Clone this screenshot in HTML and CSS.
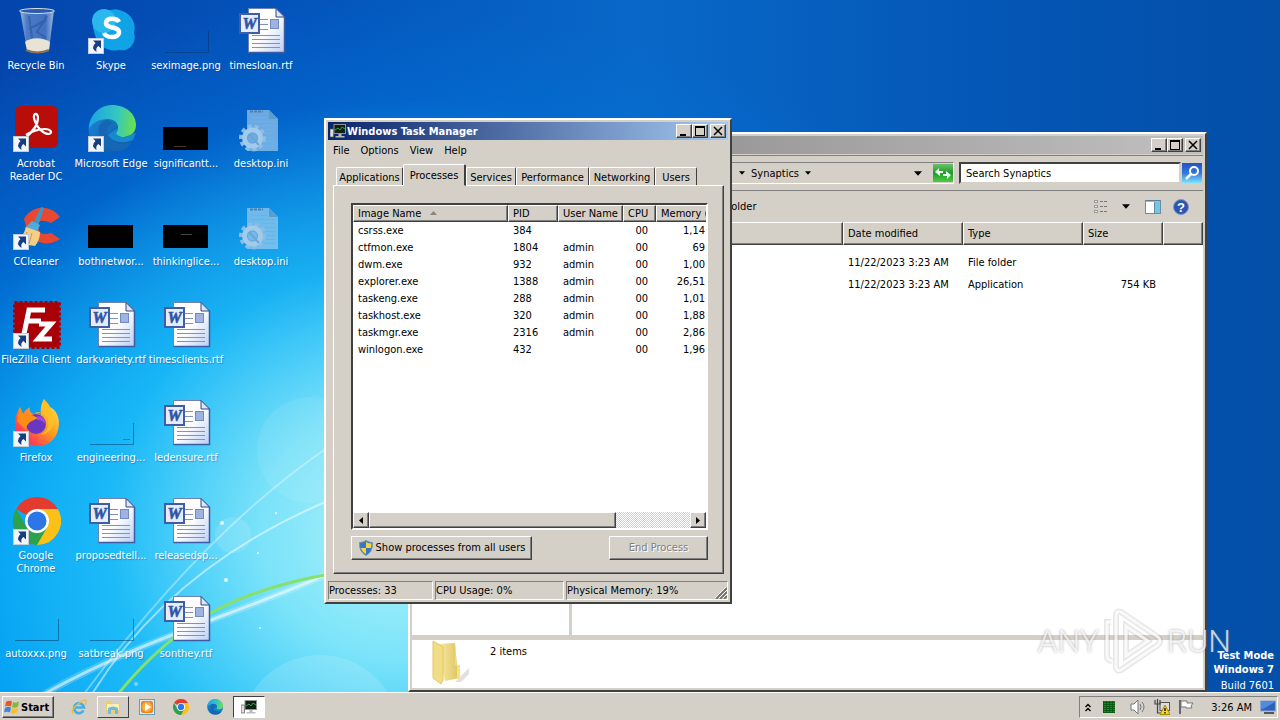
FILE: index.html
```html
<!DOCTYPE html>
<html lang="en">
<head>
<meta charset="utf-8">
<title>Desktop</title>
<link rel="stylesheet" href="styles.css">
</head>
<body>
<svg class="defs" aria-hidden="true">
  <defs>
    <linearGradient id="gPage" x1="0" y1="0" x2="1" y2="1"><stop offset=".5" stop-color="#fff"/><stop offset="1" stop-color="#b9cdf4"/></linearGradient>
    <linearGradient id="gBin" x1="0" x2="1" y1="0" y2="0"><stop offset="0" stop-color="#bcd0e8"/><stop offset=".2" stop-color="#5f88cc"/><stop offset=".75" stop-color="#4f7dc8"/><stop offset="1" stop-color="#c6d6ea"/></linearGradient>
    <linearGradient id="gEdgeA" x1="0" y1=".3" x2="1" y2=".4"><stop offset="0" stop-color="#1ba3e4"/><stop offset=".6" stop-color="#35c7c0"/><stop offset="1" stop-color="#6be04c"/></linearGradient>
    <linearGradient id="gEdgeB" x1="0" y1="0" x2="1" y2="1"><stop offset="0" stop-color="#1b8ddb"/><stop offset="1" stop-color="#0c4f9c"/></linearGradient>
    <linearGradient id="gFox" x1="1" y1="0" x2="0" y2="1"><stop offset="0" stop-color="#fff34a"/><stop offset=".45" stop-color="#ff9a1e"/><stop offset=".75" stop-color="#ff4450"/><stop offset="1" stop-color="#e0208c"/></linearGradient>
    <linearGradient id="gFolder" x1="0" x2="1"><stop offset="0" stop-color="#f9ecaa"/><stop offset="1" stop-color="#dfc25c"/></linearGradient>
    <linearGradient id="gMag" x1="0" y1="0" x2="0" y2="1"><stop offset="0" stop-color="#2451c4"/><stop offset=".5" stop-color="#3478dc"/><stop offset="1" stop-color="#7fe4fa"/></linearGradient>
    <linearGradient id="gGreen" x1="0" y1="0" x2="0" y2="1"><stop offset="0" stop-color="#6cc06a"/><stop offset=".5" stop-color="#1f9a2c"/><stop offset="1" stop-color="#50cc40"/></linearGradient>
    <symbol id="shortcut" viewBox="0 0 16 16"><rect x=".5" y=".5" width="15" height="15" fill="#f2f5fa" stroke="#c4ccd8"/><path d="M5 2.500h8v8l-2.500-2.500Q7.500 9.500 8.500 14 2 10 7.500 5z" fill="#173f80"/></symbol>
    <symbol id="word" viewBox="0 0 48 48"><path d="M10.500 1.500H38l8.500 8.500v35.500h-36z" fill="url(#gPage)" stroke="#6e83b5"/><path d="M38 1.500V10h8.500z" fill="#dce6f8" stroke="#2c4684"/><path d="M46.500 10v35.500h-36" fill="none" stroke="#3c5ca4" stroke-width="1.500"/><path d="M22 12.500h8M22 17.500h8M22 22.500h8M14 28.500h28M14 32.500h28M14 36.500h28M14 40.500h28" stroke="#8293b8"/><rect x="32.500" y="12.500" width="8" height="9" fill="#9fb3e0" stroke="#7189c6"/><rect x="2" y="7" width="19" height="19" fill="#e6ecf9" stroke="#405ea6" stroke-width="2"/><text x="11.500" y="22" text-anchor="middle" font-family="Liberation Serif, serif" font-size="16" font-weight="bold" font-style="italic" fill="#2c54a8" stroke="#2c54a8" stroke-width=".6">W</text></symbol>
    <symbol id="ini" viewBox="0 0 48 48"><path d="M9 5h22l9 9v32H9z" fill="#a5cff0" opacity=".65"/><path d="M31 5v9h9z" fill="#5c9dd0"/><path d="M12 6.500h13" stroke="#4a7eb4" stroke-width="2" stroke-dasharray="3 1"/><path d="M13 12.500h16M13 16.500h24M24 20.500h13M27 24.500h10M27 28.500h10M27 32.500h10M26 36.500h11M24 40.500h13" stroke="#71b0df"/><circle cx="14.500" cy="33" r="11.500" fill="none" stroke="#8fbde2" stroke-width="4" stroke-dasharray="4 3"/><circle cx="14.500" cy="33" r="8" fill="none" stroke="#a2caeb" stroke-width="5"/><circle cx="14.500" cy="33" r="5" fill="none" stroke="#6ba5d6"/><path d="M11 29l10 11" stroke="#6ba5d6" stroke-width="2"/></symbol>
    <symbol id="edge" viewBox="0 0 48 48"><circle cx="24" cy="24" r="23.500" fill="url(#gEdgeB)"/><path d="M1 21C3 9 12 0 24 0c14 0 24 9 24 20 0 8-6 12-12 12-5 0-8-2-8-4 0-1 2-2 2-6 0-4-4-8-10-8C11 14 4 18 1 24z" fill="url(#gEdgeA)"/><path d="M18 15C10 17 8 27 14 37c4 6 11 10 18 9 5-1 10-5 12-10-8 5-20 3-24-5-3-6 0-11 4-13-1-2-3-3-6-3z" fill="#1766b5"/><path d="M20 30c5 8 16 9 25 5l3-7-12 4c-5 0-8-2-8-4 0 0 2-2 2-5z" fill="#1789ce"/></symbol>
    <symbol id="chrome" viewBox="0 0 48 48"><path d="M24 24 3.200 12A24 24 0 0 1 44.800 12z" fill="#e33b2e"/><path d="M24 24V12h20.800A24 24 0 0 1 24 48z" fill="#fbc116"/><path d="M3.200 12l10.400 18L24 24l10.400 6L24 48A24 24 0 0 1 3.200 12z" fill="#2da24c"/><circle cx="24" cy="24" r="12" fill="#fff"/><circle cx="24" cy="24" r="9.500" fill="#2c76e8"/></symbol>
    <symbol id="monitor" viewBox="0 0 16 16"><rect x="0" y="6" width="3.500" height="8" fill="#ddd" stroke="#555" stroke-width=".7"/><rect x="4" y="1.500" width="11.500" height="9" fill="#0c2114" stroke="#8f9690"/><path d="M5 7l3-2 2 2 2-3 3 2" fill="none" stroke="#35a043"/><path d="M8.500 11h3v2h3v1.500h-9V13h3z" fill="#bbb"/></symbol>
    <symbol id="pngThumb" viewBox="0 0 48 48"><path d="M45.500 24v21.500H2" fill="none" stroke="#06335e" stroke-opacity=".5"/></symbol>
    <symbol id="down" viewBox="0 0 7 4"><path d="M0 0h7L3.500 4z"/></symbol>
  </defs>
</svg>

<main class="desktop">
  <svg class="wallpaper" viewBox="0 0 1280 692" preserveAspectRatio="none" aria-hidden="true">
    <g fill="none">
      <g stroke="#fff"><path d="M44 694C140 640 235 615 330 573" stroke-opacity=".2" stroke-width="7"/><path d="M44 694C140 640 235 615 330 573" stroke-opacity=".55" stroke-width="3"/>
      <path d="M84 694C150 605 235 510 330 446" stroke-opacity=".35" stroke-width="2"/><path d="M92 694C150 600 235 540 330 500" stroke-opacity=".5" stroke-width="2"/></g>
      <path d="M118 694C180 618 240 590 330 574" stroke="#86e06a" stroke-width="3"/>
    </g>
    <g fill="#fff"><circle cx="310" cy="450" r="53" fill-opacity=".08"/><circle cx="233" cy="535" r="18" fill-opacity=".12"/><circle cx="320" cy="735" r="80" fill-opacity=".14"/><circle cx="222" cy="523" r="2" fill-opacity=".8"/><circle cx="276" cy="513" r="1"/><circle cx="226" cy="580" r="2" fill-opacity=".8"/><circle cx="258" cy="553" r="1"/><circle cx="136" cy="684" r="2" fill-opacity=".4"/><circle cx="260" cy="628" r="1"/></g>
  </svg>

  <ul class="icons">
    <li><svg><path d="M7 3h34l-5 40q-11 6-22 0z" fill="url(#gBin)" fill-opacity=".8"/><ellipse cx="24" cy="4" rx="17.500" ry="2.500" fill="#2b5cab" stroke="#d7dfe6"/><path d="M12 35c6-5 17-5 25 0l-1 8q-11 4-22 0z" fill="#e8e3d4"/><path d="M13 43q11 5 23 0" fill="none" stroke="#89735a" stroke-width="2"/><path d="M16 9l3 22M34 9l-10 16 9 6M16 22l17-9" stroke="#274d94" stroke-width="2" fill="none" opacity=".5"/></svg><span>Recycle Bin</span></li>
    <li><svg><path d="M5 21A19 19 0 0 1 23 3 15 15 0 0 1 34 4 18 18 0 0 1 46 26 13 13 0 0 1 31 43 20 20 0 0 1 7 28z" fill="#11a3e7"/><circle cx="16" cy="14" r="12" fill="#2bb8ee"/><path d="M31 15c-2-4-13-5-13 1 0 6 13 3 13 9 0 7-13 6-15 1" fill="none" stroke="#fff" stroke-width="4.500"/><use href="#shortcut" y="31" width="16" height="16"/></svg><span>Skype</span></li>
    <li><svg><use href="#pngThumb"/></svg><span>seximage.png</span></li>
    <li><svg><use href="#word"/></svg><span>timesloan.rtf</span></li>

    <li><svg><rect x="2" y="1" width="43" height="42" rx="6" fill="#b80d08"/><path d="M11 34C17 29 25 22 25 13c0-6-5-5-4 0 2 9 9 16 15 16 4-1 2-5-4-5-7 0-15 3-19 6" fill="none" stroke="#fff" stroke-width="2.200"/><use href="#shortcut" y="31" width="16" height="16"/></svg><span>Acrobat<br>Reader DC</span></li>
    <li><svg><use href="#edge"/><use href="#shortcut" y="31" width="16" height="16"/></svg><span>Microsoft Edge</span></li>
    <li><svg><rect y="22" width="45" height="23"/><path d="M11 41.500h12" stroke="#443b12"/></svg><span>significantt...</span></li>
    <li><svg><use href="#ini"/></svg><span>desktop.ini</span></li>

    <li><svg><path d="M47 14A21 21 0 0 0 11 16l4 14a22 22 0 0 0 32 6l-9-6q-12 4-13-6t13-4z" fill="#e84832"/><path d="M28 4l3 1-6 18-5-2z" fill="#4095c8"/><path d="M19 18l8 4-3 7-12-4z" fill="#51aadd"/><path d="M13 24l14 5q0 8-5 14l-20-3q8-5 11-16z" fill="#f3cf85"/><path d="M14 29l-4 11M19 30l-3 11" stroke="#cf994c"/><use href="#shortcut" y="31" width="16" height="16"/></svg><span>CCleaner</span></li>
    <li><svg><rect y="22" width="45" height="23"/></svg><span>bothnetwor...</span></li>
    <li><svg><rect y="22" width="45" height="23"/><path d="M18 31.500h11" stroke="#444"/></svg><span>thinkinglice...</span></li>
    <li><svg><use href="#ini"/></svg><span>desktop.ini</span></li>

    <li><svg><rect x="1.500" y="1.500" width="45" height="45" fill="#a90008" stroke="#a90008" stroke-width="3" stroke-dasharray="3 2"/><path d="M11 33l5-24h16M14 20h14M26 23h12L25 38h14" fill="none" stroke="#fff" stroke-width="5"/><use href="#shortcut" y="32" width="16" height="16"/></svg><span>FileZilla Client</span></li>
    <li><svg><use href="#word"/></svg><span>darkvariety.rtf</span></li>
    <li><svg><use href="#word"/></svg><span>timesclients.rtf</span></li>
    <li class="empty"></li>

    <li><svg><path d="M31 0c1 5 5 7 9 10 6 5 7 14 5 21-2 9-10 16-20 16C12 47 3 38 2 27c0-7 1-12 5-19l3 7c2-4 5-5 7-7-1 4 1 7 4 7 2-1 5-1 7 1-1-6 0-11 3-16z" fill="url(#gFox)"/><circle cx="23" cy="25" r="10" fill="#6a38c0"/><path d="M7 8l3 7q5-3 9 1l6 3-8 4q-5 4-3 9L4 22z" fill="#ff8d16"/><path d="M21 14q11-3 14 7 2 10-7 15 10-2 13-12Q40 8 31 0q-2 7-1 14l-9 0z" fill="#ffbe26"/><path d="M24 17q9 0 9 9-3-5-9-5z" fill="#a347dd"/><use href="#shortcut" y="32" width="16" height="16"/></svg><span>Firefox</span></li>
    <li><svg><use href="#pngThumb"/><path d="M35 40.500h7" stroke="#1a7e9c"/></svg><span>engineering...</span></li>
    <li><svg><use href="#word"/></svg><span>ledensure.rtf</span></li>
    <li class="empty"></li>

    <li><svg><use href="#chrome"/><use href="#shortcut" y="32" width="16" height="16"/></svg><span>Google<br>Chrome</span></li>
    <li><svg><use href="#word"/></svg><span>proposedtell...</span></li>
    <li><svg><use href="#word"/></svg><span>releasedsp...</span></li>
    <li class="empty"></li>

    <li><svg><use href="#pngThumb"/></svg><span>autoxxx.png</span></li>
    <li><svg><use href="#pngThumb"/></svg><span>satbreak.png</span></li>
    <li><svg><use href="#word"/></svg><span>sonthey.rtf</span></li>
  </ul>

  <div class="build"><b>Test Mode</b><b>Windows 7</b><span>Build 7601</span></div>

  <section class="window explorer" aria-label="Synaptics">
    <header class="titlebar inactive">
      <span class="title"></span>
      <button class="ctl" aria-label="Minimize"><svg viewBox="0 0 14 12"><path d="M3 9h6v2H3z"/></svg></button><button class="ctl" aria-label="Maximize"><svg viewBox="0 0 14 12"><path d="M2 1h10v10H2zM3 3v7h8V3z" fill-rule="evenodd"/></svg></button><button class="ctl close" aria-label="Close"><svg viewBox="0 0 14 12"><path d="M3 2l8 8M11 2l-8 8" stroke="#000" stroke-width="1.500"/></svg></button>
    </header>
    <div class="addressrow">
      <nav class="address">
        <svg class="arrow"><use href="#down"/></svg><span>Synaptics</span><svg class="arrow"><use href="#down"/></svg>
        <svg class="arrow drop"><use href="#down"/></svg>
        <button class="refresh" aria-label="Refresh"><svg viewBox="0 0 20 18"><rect width="20" height="18" fill="url(#gGreen)"/><path d="M6 4v3h4v2H7v3L2 8zM14 15v-3h-4v-2h3V7l5 4z" fill="#eaffea"/></svg></button>
      </nav>
      <input class="search" type="text" value="Search Synaptics" aria-label="Search Synaptics">
      <button class="go" aria-label="Search"><svg viewBox="0 0 20 20"><rect width="20" height="20" fill="url(#gMag)"/><circle cx="12" cy="8" r="4" fill="none" stroke="#fff" stroke-width="2"/><path d="M9 11l-5 5" stroke="#fff" stroke-width="2.500"/></svg></button>
    </div>
    <div class="commands">
      <button class="plain newfolder">New folder</button>
      <button class="plain" aria-label="Views"><svg width="16" height="16"><path d="M1 2.500h4M1 7.500h4M1 12.500h4" stroke="#999" stroke-width="3"/><path d="M2 2.500h2M2 7.500h2M2 12.500h2" stroke="#eee"/><path d="M7 2.500h8M7 7.500h8M7 12.500h8" stroke="#777" stroke-dasharray="3 1"/></svg></button>
      <button class="plain viewdrop" aria-label="More views"><svg class="arrow"><use href="#down"/></svg></button>
      <button class="plain preview" aria-label="Preview pane"><svg width="16" height="16"><rect x=".5" y="1.500" width="15" height="13" fill="#fff" stroke="#6d8aa8"/><path d="M1 2h14" stroke="#526f92"/><path d="M10 3h5v11h-5z" fill="#71c9df"/><path d="M9.500 3v11" stroke="#658aa8"/></svg></button>
      <button class="plain" aria-label="Help"><svg width="16" height="16"><circle cx="8" cy="8" r="7.500" fill="#2e55b4" stroke="#8095c4"/><text x="8" y="12.500" text-anchor="middle" font-family="Liberation Sans, sans-serif" font-weight="bold" font-size="13" fill="#fff">?</text></svg></button>
    </div>
    <div class="browse">
      <div class="tree"></div>
      <div class="files">
        <table class="filetable">
          <colgroup><col><col class="w120"><col class="w120"><col class="w80"><col class="w40"></colgroup>
          <thead><tr><th></th><th>Date modified</th><th>Type</th><th>Size</th><th></th></tr></thead>
          <tbody><tr class="first"><td></td><td>11/22/2023 3:23 AM</td><td>File folder</td><td></td><td></td></tr>
          <tr><td></td><td>11/22/2023 3:23 AM</td><td>Application</td><td class="num">754 KB</td><td></td></tr></tbody>
        </table>
      </div>
    </div>
    <footer class="details">
      <svg width="48" height="48"><path d="M26 42l14-14v6l-8 8z" fill="#999" opacity=".3"/><path d="M8 4l18-1 2 22 3 1v12l-15 3z" fill="url(#gFolder)"/><path d="M26 3l1 22h4v13l-3 1V26l-2-1z" fill="#f5e27c"/><path d="M4 1l10 6v33l-2 4-8-6z" fill="#f1dd85" stroke="#e0c669"/></svg>
      <span>2 items</span>
    </footer>
  </section>

  <section class="window taskmgr" aria-label="Windows Task Manager">
    <header class="titlebar">
      <svg class="appicon"><use href="#monitor"/></svg><span class="title">Windows Task Manager</span>
      <button class="ctl" aria-label="Minimize"><svg viewBox="0 0 14 12"><path d="M3 9h6v2H3z"/></svg></button><button class="ctl" aria-label="Maximize"><svg viewBox="0 0 14 12"><path d="M2 1h10v10H2zM3 3v7h8V3z" fill-rule="evenodd"/></svg></button><button class="ctl close" aria-label="Close"><svg viewBox="0 0 14 12"><path d="M3 2l8 8M11 2l-8 8" stroke="#000" stroke-width="1.500"/></svg></button>
    </header>
    <nav class="menu"><button>File</button><button>Options</button><button>View</button><button>Help</button></nav>
    <div class="tabs" role="tablist"><button role="tab">Applications</button><button role="tab" class="selected" aria-selected="true">Processes</button><button role="tab">Services</button><button role="tab">Performance</button><button role="tab">Networking</button><button role="tab">Users</button></div>
    <div class="panel">
      <div class="list">
        <table class="proc">
          <colgroup><col><col class="w50"><col class="w65"><col class="w33"><col class="w50"></colgroup>
          <thead><tr><th>Image Name <svg class="sort" viewBox="0 0 7 4"><path d="M0 4h7L3.500 0z" fill="#8a867e"/></svg></th><th>PID</th><th>User Name</th><th>CPU</th><th>Memory (</th></tr></thead>
          <tbody>
          <tr><td>csrss.exe</td><td>384</td><td></td><td>00</td><td>1,14</td></tr>
          <tr><td>ctfmon.exe</td><td>1804</td><td>admin</td><td>00</td><td>69</td></tr>
          <tr><td>dwm.exe</td><td>932</td><td>admin</td><td>00</td><td>1,00</td></tr>
          <tr><td>explorer.exe</td><td>1388</td><td>admin</td><td>00</td><td>26,51</td></tr>
          <tr><td>taskeng.exe</td><td>288</td><td>admin</td><td>00</td><td>1,01</td></tr>
          <tr><td>taskhost.exe</td><td>320</td><td>admin</td><td>00</td><td>1,88</td></tr>
          <tr><td>taskmgr.exe</td><td>2316</td><td>admin</td><td>00</td><td>2,86</td></tr>
          <tr><td>winlogon.exe</td><td>432</td><td></td><td>00</td><td>1,96</td></tr>
          </tbody>
        </table>
        <div class="scroll"><button aria-label="Scroll left"><svg viewBox="0 0 4 7"><path d="M4 0v7L0 3.500z"/></svg></button><div class="track"><div class="thumb"></div></div><button aria-label="Scroll right"><svg viewBox="0 0 4 7"><path d="M0 0v7l4-3.500z"/></svg></button></div>
      </div>
      <div class="actions">
        <button class="push"><svg width="16" height="16"><path d="M8 .5q3 2 6.500 2Q15 12 8 15.500 1 12 1.500 2.500 5 2.500 8 .5z" fill="#3476c8" stroke="#7e93a8"/><path d="M8 2q3 1.500 5.500 1.500L13 8H8zM8 8v6Q4 12 3 8z" fill="#f3d443"/></svg>Show processes from all users</button>
        <button class="push end" disabled>End Process</button>
      </div>
    </div>
    <footer class="status"><span>Processes: 33</span><span>CPU Usage: 0%</span><span>Physical Memory: 19%<svg width="13" height="13"><path d="M2 13L13 2M6 13l7-7M10 13l3-3" stroke="#77736c" stroke-width="2"/><path d="M1 12L12 1M5 12l8-8M9 12l4-4" stroke="#fff"/></svg></span></footer>
  </section>

  <div class="watermark"><span>ANY</span><svg width="62" height="66" viewBox="0 0 62 66"><g id="play" fill="none" stroke="#8c8c8c" stroke-opacity=".22" stroke-width="6"><path d="M19 4l37 25q4 4 0 8L19 62q-5 2-5-4V8q0-6 5-4zM24 18v30l22-15zM9 14H5v34q0 4 5 5"/></g><path d="M19 4l37 25q4 4 0 8L19 62q-5 2-5-4V8q0-6 5-4zM24 18v30l22-15zM9 14H5v34q0 4 5 5" fill="none" stroke="#fff" stroke-opacity=".75" stroke-width="3"/></svg><span>RUN</span></div>
</main>

<footer class="taskbar">
  <button class="start"><svg width="16" height="16"><path d="M2 3q3-2 6-.5L7 7.500Q4 6 1 7.500z" fill="#e8562a"/><path d="M9 3q3 1.500 6-.5L14 7.500q-3 2-6 .5z" fill="#82b93c"/><path d="M1 9q3-2 6-.5L6 13.500Q3 12 0 13.500z" fill="#3f86d6"/><path d="M8 9q3 1.500 6-.5L13 13.500q-3 2-6 .5z" fill="#f8bf2c"/></svg>Start</button>
  <button class="task" aria-label="Internet Explorer"><svg viewBox="0 0 16 16"><path d="M12.500 11.500A5 5 0 1 1 13 8.500H4" fill="none" stroke="#47aee4" stroke-width="2.600"/><path d="M2 14.500Q-1 11 7 5t8-3-1 4" fill="none" stroke="#edbd32" stroke-width="1.300"/></svg></button>
  <button class="task raised" aria-label="Windows Explorer"><svg viewBox="0 0 16 16"><path d="M1 2h5l1 2h8v10H1z" fill="#e8cf70"/><path d="M2 5h12v6H2z" fill="#fff2b0"/><path d="M3 15V9q5-3 10 0v6h-3v-4H6v4z" fill="#72b9e7"/></svg></button>
  <button class="task" aria-label="Media Player"><svg viewBox="0 0 16 16"><rect x=".5" y=".5" width="15" height="15" fill="#dbeaf5" stroke="#629fc7"/><rect x="2" y="2" width="12" height="12" rx="2" fill="#f08419"/><circle cx="8" cy="8" r="5" fill="#ffad42"/><path d="M6 4l6 4-6 4z" fill="#fff"/></svg></button>
  <button class="task" aria-label="Google Chrome"><svg><use href="#chrome"/></svg></button>
  <button class="task" aria-label="Microsoft Edge"><svg><use href="#edge"/></svg></button>
  <button class="task pressed" aria-label="Task Manager"><svg><use href="#monitor"/></svg></button>
  <div class="tray">
    <svg class="chev" viewBox="0 0 6 9"><path d="M.5 4L3 1.500 5.500 4M.5 8L3 5.500 5.500 8" fill="none" stroke="#000" stroke-width="1.400"/></svg>
    <svg class="cpu" viewBox="0 0 12 12"><rect width="12" height="12" fill="#075c12"/><path d="M2 0v12M5 0v12M8 0v12M11 0v12" stroke="#1fc33a" stroke-dasharray="1 1"/></svg>
    <svg viewBox="0 0 16 16"><path d="M1 5h3l4-4v14l-4-4H1z" fill="#fff" stroke="#777"/><path d="M10 5q2 3 0 6M12 3q4 5 0 10" fill="none" stroke="#777"/></svg>
    <svg viewBox="0 0 16 16"><rect x="6" y="3.500" width="9.500" height="8" fill="#ddd" stroke="#555"/><path d="M1 1v4h5V1M3.500 1v13H7M3.500 0v4" fill="none" stroke="#444" stroke-width="1.200"/><path d="M11 6l5 9.500H6z" fill="#f8d529" stroke="#a98b00"/><path d="M11 9v3M11 13v1.500" stroke="#000" stroke-width="1.300"/></svg>
    <svg class="flag" viewBox="0 0 16 16"><path d="M2 1v14" stroke="#666" stroke-width="2"/><path d="M3 2h6v2h6l-2 3 1 2H8V8H3z" fill="#fff" stroke="#777"/></svg>
    <time>3:26 AM</time>
    <svg viewBox="0 0 16 16"><rect x=".5" y="2" width="15" height="10" fill="#2c61bc" stroke="#8ba7d2"/><path d="M1 3h14L3 10H1z" fill="#518bd9"/><path d="M4 14h10" stroke="#555" stroke-width="2"/></svg>
  </div>
</footer>
</body>
</html>
```
FILE: styles.css
```css
* { box-sizing: border-box; }
html, body { height: 100%; }
body {
  margin: 0;
  display: flex;
  flex-direction: column;
  overflow: hidden;
  font: 11px/13px "DejaVu Sans Condensed", Tahoma, "Noto Sans", sans-serif;
  color: #000;
}
button, input { font: inherit; color: inherit; border: 0; padding: 0; background: none; border-radius: 0; }
.defs { position: absolute; width: 0; height: 0; }

.desktop {
  position: relative;
  flex: 1;
  overflow: hidden;
  background:
    radial-gradient(ellipse 470px 430px at 400px 530px, rgba(184,247,250,.95) 0%, rgba(140,235,250,.85) 30%, rgba(40,200,250,.6) 62%, rgba(0,160,240,0) 100%),
    radial-gradient(ellipse 800px 620px at 350px 620px, #22bdf8 0%, #009cf2 45%, rgba(0,118,220,.6) 75%, rgba(4,86,188,0) 100%),
    linear-gradient(90deg, #0345ac 0%, #0355bc 25%, #0868c8 50%, #0455b4 80%, #034fa8 100%);
}
.wallpaper { position: absolute; inset: 0; width: 100%; height: 100%; }

.icons {
  position: relative;
  list-style: none;
  margin: 0;
  padding: 7px 0 0;
  display: grid;
  grid-template-columns: repeat(4, 75px);
  grid-auto-rows: 98px;
}
.icons li { display: flex; flex-direction: column; align-items: center; gap: 4px; padding-right: 1px; }
.icons svg { width: 48px; height: 48px; flex: none; }
.icons span { padding-right: 2px; color: #fff; text-align: center; white-space: nowrap; text-shadow: 1px 1px 1px rgba(0,40,100,.35); }

.window {
  position: absolute;
  display: flex;
  flex-direction: column;
  padding: 2px;
  background: #d4d0c8;
  border: 2px solid;
  border-color: #fff #404040 #404040 #fff;
}
.explorer { left: 408px; top: 132px; width: 799px; height: 560px; }
.taskmgr { left: 324px; top: 118px; width: 408px; height: 486px; }

.titlebar {
  display: flex;
  align-items: center;
  flex: none;
  height: 18px;
  padding: 0 2px;
  color: #fff;
  font-weight: bold;
  background: linear-gradient(90deg, #0a246a, #a6caf0);
}
.titlebar.inactive { background: linear-gradient(90deg, #808080, #c0c0c0); }
.title { flex: 1; white-space: nowrap; }
.appicon { width: 16px; height: 16px; margin-right: 1px; }
.ctl, .scroll button, .push, .thumb, .start {
  background: #d4d0c8;
  border: 1px solid;
  border-color: #fff #404040 #404040 #fff;
  box-shadow: inset -1px -1px #808080;
}
.ctl { width: 16px; height: 14px; display: flex; }
.ctl svg { width: 14px; height: 12px; }
.ctl.close { margin-left: 2px; }

.addressrow {
  display: flex;
  align-items: center;
  flex: none;
  height: 36px;
  margin-top: 1px;
  padding: 0 1px 0 72px;
  border: 1px solid #808080;
  border-width: 1px 0;
}
.address {
  flex: 1;
  display: flex;
  align-items: center;
  gap: 6px;
  height: 22px;
  padding-left: 254px;
  border: 1px solid;
  border-color: #808080 #fff #fff #808080;
}
.arrow { width: 6px; height: 4px; }
.address .drop { width: 8px; height: 5px; margin-left: auto; }
.refresh { width: 20px; height: 18px; margin-left: 5px; }
.refresh svg, .go svg { display: block; width: 20px; }
.search {
  width: 222px;
  height: 22px;
  margin-left: 5px;
  padding: 0 5px;
  background: #fff;
  border: 2px solid;
  border-color: #404040 #d4d0c8 #d4d0c8 #404040;
}
.go { width: 20px; height: 20px; margin-left: 1px; }

.commands { display: flex; align-items: center; flex: none; height: 31px; padding-right: 14px; }
.plain { display: flex; align-items: center; }
.newfolder { flex: 1; padding-left: 291px; }
.viewdrop { margin: 0 15px 0 13px; }
.viewdrop .arrow { width: 8px; height: 5px; }
.preview { margin-right: 12px; }

.browse { flex: 1; display: flex; min-height: 0; }
.tree { width: 157px; background: #fff; }
.files { flex: 1; margin-left: 3px; background: #fff; }
table { border-collapse: separate; border-spacing: 0; table-layout: fixed; width: 100%; }
th, td { padding: 0 5px; font-weight: normal; text-align: left; white-space: nowrap; overflow: hidden; }
th { background: #d4d0c8; border: 1px solid; border-color: #fff #404040 #404040 #fff; box-shadow: inset -1px -1px #808080; }
.filetable th { height: 23px; padding: 0 4px; }
.filetable td { height: 22px; }
.filetable .first td { height: 28px; padding-top: 6px; }
.filetable .num { text-align: right; padding-right: 7px; }
.w120 { width: 120px; }
.w80 { width: 80px; }
.w40 { width: 40px; }
.w50 { width: 50px; }
.w65 { width: 65px; }
.w33 { width: 33px; }
.details {
  display: flex;
  flex: none;
  height: 53px;
  padding: 0 17px;
  gap: 13px;
  background: #fff;
  border-top: 5px solid #d4d0c8;
}
.details span { padding-top: 5px; }

.menu { display: flex; gap: 11px; height: 20px; padding-left: 5px; }
.tabs {
  display: grid;
  grid-template-columns: 67px 63px 50px 73px 66px 42px;
  height: 25px;
  padding: 7px 0 0 8px;
}
.tabs button {
  border: 1px solid;
  border-color: #fff #404040 transparent #fff;
  border-radius: 2px 2px 0 0;
  height: 19px;
  padding-top: 1px;
  white-space: nowrap;
}
.tabs .selected { background: #d4d0c8; height: 22px; margin-top: -3px; padding-bottom: 1px; z-index: 1; position: relative; border-right-width: 2px; }
.panel {
  flex: 1;
  display: flex;
  flex-direction: column;
  margin: 0 4px 7px 5px;
  padding: 17px 15px 13px 17px;
  border: 1px solid;
  border-color: #fff #404040 #404040 #fff;
  box-shadow: inset -1px -1px #808080;
}
.list {
  flex: 1;
  display: flex;
  flex-direction: column;
  overflow: hidden;
  background: #fff;
  border: 2px solid;
  border-color: #404040 #fff #fff #404040;
}
.proc th { height: 17px; padding: 0 4px; }
.proc th:last-child { padding-right: 0; border-right: 0; box-shadow: inset 0 -1px #808080; }
.proc td { height: 17px; padding: 0 5px; }
.proc td:nth-child(4) { text-align: right; padding-right: 8px; }
.proc td:last-child { text-align: right; padding-right: 1px; }
.sort { width: 7px; height: 4px; margin: 0 0 2px 6px; }
.scroll { display: flex; height: 16px; margin-top: auto; }
.scroll button { width: 16px; display: grid; place-items: center; }
.scroll button svg { width: 4px; height: 7px; }
.track { flex: 1; background: repeating-conic-gradient(#fff 0 25%, #d4d0c8 0 50%) 0 0 / 2px 2px; }
.thumb { width: 77%; height: 16px; }
.actions { display: flex; justify-content: space-between; margin-top: 6px; }
.push { display: flex; align-items: center; justify-content: center; gap: 2px; width: 181px; height: 24px; padding-bottom: 1px; white-space: nowrap; }
.push.end { width: 99px; color: #808080; text-shadow: 1px 1px #fff; }
.status { display: grid; grid-template-columns: 105px 129px 1fr; gap: 2px; height: 19px; }
.status span { display: flex; align-items: center; border: 1px solid; border-color: #808080 #fff #fff #808080; white-space: nowrap; }
.status svg { margin: 4px 0 0 auto; }

.build { position: absolute; right: 6px; bottom: 0; display: flex; flex-direction: column; align-items: flex-end; gap: 1px; color: #fff; }
.build span { margin-top: 2px; }
.watermark {
  position: absolute;
  right: 49px;
  bottom: 18px;
  display: flex;
  align-items: center;
  gap: 3px;
  font: 300 32px/66px Roboto, "Liberation Sans", sans-serif;
  color: rgba(255,255,255,.75);
  text-shadow: 0 0 3px rgba(110,110,110,.6);
}

.taskbar {
  display: flex;
  align-items: center;
  flex: none;
  height: 28px;
  padding: 1px 2px 0;
  background: #d4d0c8;
  border-top: 1px solid #fff;
}
.start { display: flex; align-items: center; gap: 1px; width: 52px; height: 22px; padding-left: 1px; margin-right: 9px; font-weight: bold; }
.task { width: 32px; height: 22px; margin-right: 2px; display: grid; place-items: center; border: 1px solid transparent; }
.task svg { width: 16px; height: 16px; }
.task.raised { border-color: #fff #404040 #404040 #fff; }
.task.pressed { border-color: #404040 #fff #fff #404040; background: #fff; }
.tray {
  display: flex;
  align-items: center;
  gap: 8px;
  margin-left: auto;
  height: 22px;
  padding: 0 1px 0 5px;
  border: 1px solid;
  border-color: #808080 #fff #fff #808080;
}
.tray svg { width: 16px; height: 16px; }
.tray .chev { width: 6px; height: 9px; }
.tray .cpu { width: 12px; height: 12px; margin: 0 7px 0 4px; }
.tray .flag { margin-right: 9px; }
```
